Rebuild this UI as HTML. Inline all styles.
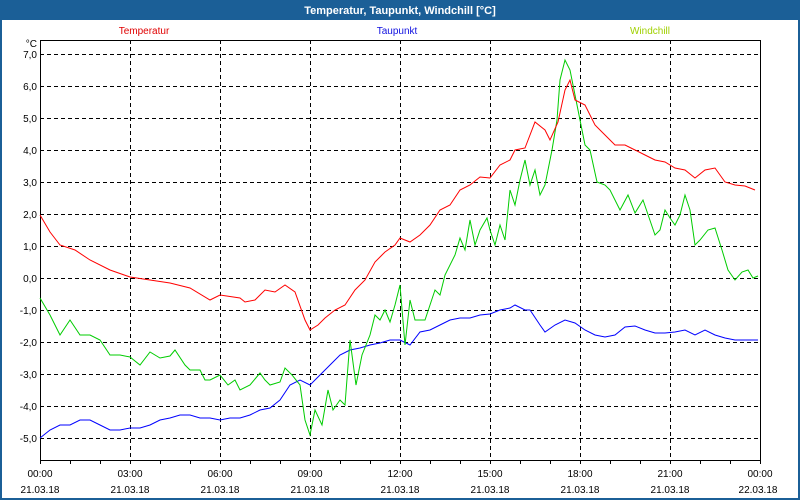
<!DOCTYPE html>
<html><head><meta charset="utf-8"><style>
html,body{margin:0;padding:0;width:800px;height:500px;overflow:hidden;background:#fff;font-family:"Liberation Sans",sans-serif}
</style></head><body>
<svg width="800" height="500" xmlns="http://www.w3.org/2000/svg" font-family="Liberation Sans, sans-serif">
<rect x="0" y="0" width="800" height="500" fill="#1b5f97"/>
<rect x="2" y="20" width="796" height="478" fill="#fff"/>
<text x="400" y="14" font-size="11" font-weight="bold" fill="#fff" text-anchor="middle">Temperatur, Taupunkt, Windchill [°C]</text>
<text x="144" y="34" font-size="10" fill="#e00000" text-anchor="middle">Temperatur</text>
<text x="397" y="34" font-size="10" fill="#1010e0" text-anchor="middle">Taupunkt</text>
<text x="650" y="34" font-size="10" fill="#a0d000" text-anchor="middle">Windchill</text>
<g stroke="#000" stroke-dasharray="4,3" stroke-width="1">
<path d="M40 54.5H760M40 86.5H760M40 118.5H760M40 150.5H760M40 182.5H760M40 214.5H760M40 246.5H760M40 278.5H760M40 310.5H760M40 342.5H760M40 374.5H760M40 406.5H760M40 438.5H760"/>
<path d="M130.5 40V460M220.5 40V460M310.5 40V460M400.5 40V460M490.5 40V460M580.5 40V460M670.5 40V460"/>
</g>
<rect x="40.5" y="40.5" width="720" height="420" fill="none" stroke="#000"/>
<path stroke="#000" d="M70.5 460V464M100.5 460V464M130.5 460V464M160.5 460V464M190.5 460V464M220.5 460V464M250.5 460V464M280.5 460V464M310.5 460V464M340.5 460V464M370.5 460V464M400.5 460V464M430.5 460V464M460.5 460V464M490.5 460V464M520.5 460V464M550.5 460V464M580.5 460V464M610.5 460V464M640.5 460V464M670.5 460V464M700.5 460V464M730.5 460V464M40.5 460V464M760.5 460V464"/>
<g font-size="10" fill="#000" text-anchor="end">
<text x="37" y="47">°C</text>
<text x="37" y="58">7,0</text><text x="37" y="90">6,0</text><text x="37" y="122">5,0</text><text x="37" y="154">4,0</text><text x="37" y="186">3,0</text><text x="37" y="218">2,0</text><text x="37" y="250">1,0</text><text x="37" y="282">0,0</text><text x="37" y="314">-1,0</text><text x="37" y="346">-2,0</text><text x="37" y="378">-3,0</text><text x="37" y="410">-4,0</text><text x="37" y="442">-5,0</text>
</g>
<g font-size="10" fill="#000" text-anchor="middle">
<text x="40" y="477">00:00</text><text x="130" y="477">03:00</text><text x="220" y="477">06:00</text><text x="310" y="477">09:00</text><text x="400" y="477">12:00</text><text x="490" y="477">15:00</text><text x="580" y="477">18:00</text><text x="670" y="477">21:00</text><text x="760" y="477">00:00</text>
<text x="40" y="493">21.03.18</text><text x="130" y="493">21.03.18</text><text x="220" y="493">21.03.18</text><text x="310" y="493">21.03.18</text><text x="400" y="493">21.03.18</text><text x="490" y="493">21.03.18</text><text x="580" y="493">21.03.18</text><text x="670" y="493">21.03.18</text><text x="758" y="493">22.03.18</text>
</g>
<polyline fill="none" stroke="#0000ff" points="40,438 50,430 60,425 70,425 80,420 90,420 100,425 110,430 120,430 130,428 140,428 150,425 160,420 170,418 180,415 190,415 200,418 210,418 220,420 230,418 240,418 250,415 260,410 270,408 280,400 290,385 300,380 310,385 320,375 330,365 340,355 350,350 360,348 370,345 380,343 390,340 400,340 410,345 420,332 430,330 440,325 450,320 460,318 470,318 480,315 490,314 500,310 510,308 515,305 525,310 530,310 540,325 545,332 555,325 565,320 575,323 585,330 595,335 605,337 615,335 625,327 635,326 645,330 655,333 665,333 675,332 685,330 695,335 705,330 715,335 725,338 735,340 745,340 758,340"/>
<polyline fill="none" stroke="#00cc00" points="40,298 50,315 60,335 70,320 80,335 90,335 100,340 110,355 120,355 130,357 140,365 150,352 160,358 170,356 175,350 185,365 190,370 200,370 205,380 210,380 220,375 228,385 235,380 240,390 250,385 260,373 265,380 270,385 280,382 285,368 292,375 300,385 305,420 310,435 315,410 322,425 328,390 333,410 340,400 345,405 350,340 356,385 362,355 370,335 375,315 380,320 385,310 390,322 395,305 400,285 405,345 410,300 415,320 425,320 435,290 440,295 445,275 455,255 460,238 465,250 470,220 475,245 480,230 487,218 490,230 495,245 500,225 505,240 510,190 515,205 520,180 525,160 530,185 535,170 540,195 545,185 552,150 557,120 560,80 565,60 570,70 575,95 580,120 585,145 590,150 597,182 605,185 610,190 620,210 628,195 635,213 643,200 655,235 660,230 665,210 670,218 675,225 680,215 685,195 690,210 695,245 700,240 708,230 715,228 722,250 728,270 735,280 742,272 748,270 753,278 758,276"/>
<polyline fill="none" stroke="#ff0000" points="40,215 50,232 60,245 75,250 90,260 110,270 130,277 150,280 170,283 190,288 210,300 220,295 240,298 245,302 255,300 265,290 275,292 285,285 295,292 305,320 310,330 318,325 325,318 335,310 345,305 355,290 365,280 375,262 385,252 395,245 400,238 410,242 420,235 430,225 440,210 450,205 460,190 470,185 480,177 490,178 500,165 510,160 515,150 525,148 535,122 545,130 550,140 558,122 565,90 570,80 575,100 585,105 595,125 605,135 615,145 625,145 635,150 645,155 655,160 665,162 675,168 685,170 695,178 705,170 715,168 725,182 735,185 745,186 755,190"/>
</svg>
</body></html>
